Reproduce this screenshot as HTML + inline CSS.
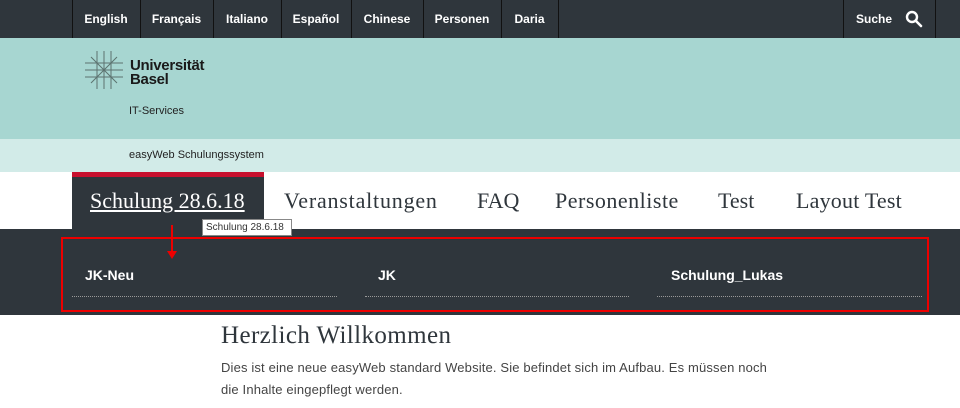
<!DOCTYPE html>
<html><head><style>
*{margin:0;padding:0;box-sizing:border-box}
body{width:960px;height:408px;overflow:hidden;background:#fff;font-family:"Liberation Sans",sans-serif;position:relative}
.top{position:absolute;left:0;top:0;width:960px;height:38px;background:#2f363c}
.top span{position:absolute;top:0;height:38px;line-height:38px;color:#fff;font-size:12px;font-weight:bold;text-align:center}
.sep{position:absolute;top:0;width:1px;height:38px;background:#111}
.teal{position:absolute;top:38px;left:0;width:960px;height:101px;background:#a7d6d1}
.light{position:absolute;top:139px;left:0;width:960px;height:33px;background:#d2ebe8;font-size:11px;color:#222}
.nav{position:absolute;top:172px;left:0;width:960px;height:57px;background:#fff}
.nav a{position:absolute;top:16px;font-family:"Liberation Serif",serif;font-size:22px;color:#2f363c;text-decoration:none}
.dark{position:absolute;top:229px;left:0;width:960px;height:86px;background:#2f363c}
.sub{position:absolute;top:38px;color:#fff;font-size:14px;font-weight:bold}
.ul{position:absolute;top:67px;height:1px;border-top:1px dotted #999}
</style></head><body>
<div class="top">
<div class="sep" style="left:72px"></div><div class="sep" style="left:140px"></div><div class="sep" style="left:213px"></div><div class="sep" style="left:281px"></div><div class="sep" style="left:351px"></div><div class="sep" style="left:423px"></div><div class="sep" style="left:501px"></div><div class="sep" style="left:558px"></div><div class="sep" style="left:843px"></div><div class="sep" style="left:935px"></div>
<span style="left:72px;width:68px">English</span>
<span style="left:140px;width:73px">Français</span>
<span style="left:213px;width:68px">Italiano</span>
<span style="left:281px;width:70px">Español</span>
<span style="left:351px;width:72px">Chinese</span>
<span style="left:423px;width:78px">Personen</span>
<span style="left:501px;width:57px">Daria</span>
<span style="left:856px;width:36px">Suche</span>
<svg style="position:absolute;left:905px;top:10px" width="18" height="18" viewBox="0 0 18 18"><circle cx="7" cy="7" r="5" fill="none" stroke="#fff" stroke-width="2.4"/><path d="M11 11l5 5" stroke="#fff" stroke-width="2.6" stroke-linecap="round"/></svg>
</div>
<div class="teal">
<svg style="position:absolute;left:85px;top:13px" width="38" height="38" viewBox="0 0 38 38" stroke="#4a5a58" stroke-width="1" fill="none"><path d="M0 19h38M19 0v38M6 6l26 26M32 6L6 32M0 12h38M0 26h38M12 0v38M26 0v38" opacity=".8"/></svg>
<div style="position:absolute;left:130px;top:21px;font-size:15px;font-weight:bold;line-height:14px;color:#1a1a1a;letter-spacing:-0.3px">Universität<br>Basel</div>
<div style="position:absolute;left:129px;top:67px;font-size:11px;color:#222">IT-Services</div>
</div>
<div class="light"><div style="position:absolute;left:129px;top:10px">easyWeb Schulungssystem</div></div>
<div class="nav">
<div style="position:absolute;left:72px;top:0;width:192px;height:57px;background:#2f363c;border-top:5px solid #c8102e"></div>
<a style="left:90px;color:#fff;text-decoration:underline">Schulung 28.6.18</a>
<a style="left:284px;letter-spacing:0.8px">Veranstaltungen</a>
<a style="left:477px">FAQ</a>
<a style="left:555px;letter-spacing:0.5px">Personenliste</a>
<a style="left:718px">Test</a>
<a style="left:796px;letter-spacing:0.2px">Layout Test</a>
</div>
<div style="position:absolute;left:202px;top:219px;width:90px;height:17px;background:#fff;border:1px solid #888;font-size:10px;color:#333;padding:2px 3px;z-index:3">Schulung 28.6.18</div>
<div class="dark">
<div style="position:absolute;left:61px;top:8px;width:868px;height:75px;border:2px solid #e00"></div>
<div style="position:absolute;left:171px;top:-4px;width:2px;height:26px;background:#e00"></div>
<div style="position:absolute;left:167px;top:22px;border-left:5px solid transparent;border-right:5px solid transparent;border-top:8px solid #e00"></div>
<div class="sub" style="left:85px">JK-Neu</div>
<div class="sub" style="left:378px">JK</div>
<div class="sub" style="left:671px">Schulung_Lukas</div>
<div class="ul" style="left:72px;width:265px"></div>
<div class="ul" style="left:365px;width:264px"></div>
<div class="ul" style="left:657px;width:265px"></div>
</div>
<div style="position:absolute;left:221px;top:322px;font-family:'Liberation Serif',serif;font-size:25px;letter-spacing:0.4px;color:#2f363c">Herzlich Willkommen</div>
<div style="position:absolute;left:221px;top:357px;width:556px;font-size:13px;line-height:22px;color:#444;letter-spacing:0.15px">Dies ist eine neue easyWeb standard Website. Sie befindet sich im Aufbau. Es müssen noch die Inhalte eingepflegt werden.</div>
</body></html>
